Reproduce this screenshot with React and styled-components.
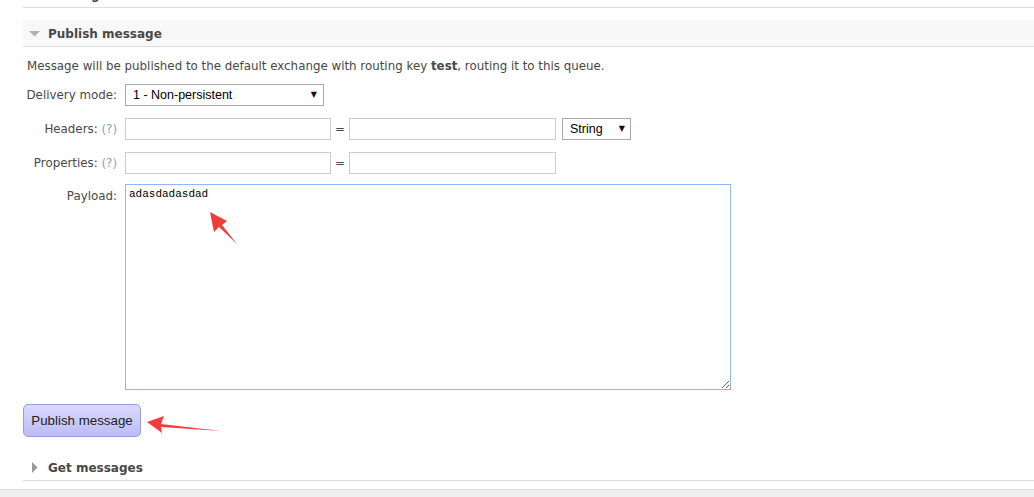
import React from 'react';
import styled, { createGlobalStyle } from 'styled-components';

const GlobalStyle = createGlobalStyle`
  html, body {
    margin: 0;
    padding: 0;
    background: #fff;
  }
  body {
    font: 11.85px "DejaVu Sans", Verdana, sans-serif;
    color: #484848;
    overflow: hidden;
  }
`;

const Root = styled.div`
  position: relative;
  display: flow-root;
  height: 497px;
  overflow: hidden;
`;

const Page = styled.div`
  margin: -19px 0 0 23px;
`;

const Section = styled.section`
  margin-bottom: ${(p) => p.gap || 12}px;
`;

const SectionHeader = styled.h2`
  box-sizing: border-box;
  margin: 0;
  height: 27px;
  display: flex;
  align-items: center;
  gap: 8px;
  padding-left: 6px;
  padding-top: 1px;
  font-size: 12px;
  font-weight: bold;
  color: #484848;
  background: ${(p) => (p.open ? '#f8f8f8' : 'transparent')};
  border-bottom: 1px solid #dddddd;
`;

const Toggle = styled.svg`
  width: 11px;
  height: 11px;
  flex: none;
  fill: ${(p) => (p.open ? '#b0b0b0' : '#999999')};
`;

const Body = styled.div`
  padding: 0 0 5px 0;
`;

const Intro = styled.p`
  margin: 12px 0 10px 4px;
  line-height: 15px;
  b {
    font-weight: bold;
  }
`;

const Form = styled.div`
  display: grid;
  grid-template-columns: 94px auto;
  column-gap: 8px;
  row-gap: 12px;
  align-items: center;
`;

const Label = styled.label`
  text-align: right;
  white-space: nowrap;
  align-self: ${(p) => (p.top ? 'start' : 'center')};
  padding-top: ${(p) => (p.top ? '3px' : '0')};
`;

const Help = styled.span`
  color: #8a9fb8;
`;

const Fields = styled.div`
  display: flex;
  align-items: center;
`;

const TextInput = styled.input`
  box-sizing: border-box;
  width: ${(p) => p.w}px;
  height: 22px;
  margin: 0;
  border: 1px solid #cccccc;
  padding: 1px 4px;
  font: 13px "Liberation Sans", Arial, sans-serif;
  outline: none;
`;

const Equals = styled.span`
  width: 18px;
  text-align: center;
  font: 12px "DejaVu Sans", Verdana, sans-serif;
`;

const SelectWrap = styled.div`
  position: relative;
  display: inline-flex;
  width: ${(p) => p.w}px;
  margin-left: ${(p) => p.offset || 0}px;
  &::after {
    content: '▼';
    position: absolute;
    right: ${(p) => (p.small ? 6 : 7)}px;
    top: 6px;
    font-size: 8px;
    line-height: 10px;
    color: #111;
    pointer-events: none;
  }
`;

const Select = styled.select`
  appearance: none;
  box-sizing: border-box;
  width: 100%;
  height: 22px;
  margin: 0;
  padding: 0 0 0 7px;
  border: 1px solid #a9a9a9;
  border-radius: 0;
  background: #fff;
  color: #000;
  font: 12.5px "Liberation Sans", Arial, sans-serif;
  outline: none;
`;

const Payload = styled.textarea`
  box-sizing: border-box;
  width: 606px;
  height: 206px;
  margin: -2px 0 0 0;
  padding: 3px 3px;
  border: 1px solid #90b6f5;
  font: 11px "Liberation Mono", "Courier New", monospace;
  color: #000;
  resize: both;
  outline: none;
  display: block;
`;

const PublishButton = styled.button`
  box-sizing: border-box;
  display: block;
  margin-top: 14px;
  width: 118px;
  height: 33px;
  padding: 0;
  border: 1px solid #9a9ade;
  border-radius: 5px;
  background: linear-gradient(#dadaff, #bcbcf6);
  color: #222;
  font: 13.33px "Liberation Sans", Arial, sans-serif;
  cursor: pointer;
`;

const Footer = styled.div`
  height: 20px;
  border-top: 1px solid #dddddd;
  background: #f0f0f0;
`;

const Marks = styled.svg`
  position: absolute;
  left: 0;
  top: 0;
  width: 1034px;
  height: 497px;
  pointer-events: none;
  fill: #f23d3d;
`;

const Arrow = ({ open }) => (
  <Toggle open={open} viewBox="0 0 11 11">
    {open ? <polygon points="0,3 11,3 5.5,8.5" /> : <polygon points="3,0 8.5,5.5 3,11" />}
  </Toggle>
);

const Header = ({ open, children }) => (
  <SectionHeader open={open}>
    <Arrow open={open} />
    {children}
  </SectionHeader>
);

export default function App() {
  return (
    <Root>
      <GlobalStyle />
      <Page>
        <Section>
          <Header>Bindings</Header>
        </Section>
        <Section>
          <Header open>Publish message</Header>
          <Body>
            <Intro>
              Message will be published to the default exchange with routing key <b>test</b>, routing it to this queue.
            </Intro>
            <Form>
              <Label>Delivery mode:</Label>
              <Fields>
                <SelectWrap w={199}>
                  <Select defaultValue="1">
                    <option value="1">1 - Non-persistent</option>
                    <option value="2">2 - Persistent</option>
                  </Select>
                </SelectWrap>
              </Fields>

              <Label>
                Headers: <Help>(?)</Help>
              </Label>
              <Fields>
                <TextInput w={206} />
                <Equals>=</Equals>
                <TextInput w={207} />
                <SelectWrap w={69} offset={6} small>
                  <Select defaultValue="string">
                    <option value="string">String</option>
                    <option value="number">Number</option>
                  </Select>
                </SelectWrap>
              </Fields>

              <Label>
                Properties: <Help>(?)</Help>
              </Label>
              <Fields>
                <TextInput w={206} />
                <Equals>=</Equals>
                <TextInput w={207} />
              </Fields>

              <Label top>Payload:</Label>
              <Payload defaultValue="adasdadasdad" />
            </Form>
            <PublishButton>Publish message</PublishButton>
          </Body>
        </Section>
        <Section gap={8}>
          <Header>Get messages</Header>
        </Section>
      </Page>
      <Footer />
      <Marks viewBox="0 0 1034 497">
        <polygon points="210,212 227,221 222,225 237,244 219,227 214,232" />
        <polygon points="147,422 164,416 161,424 221,431 161,427 162,433" />
      </Marks>
    </Root>
  );
}
